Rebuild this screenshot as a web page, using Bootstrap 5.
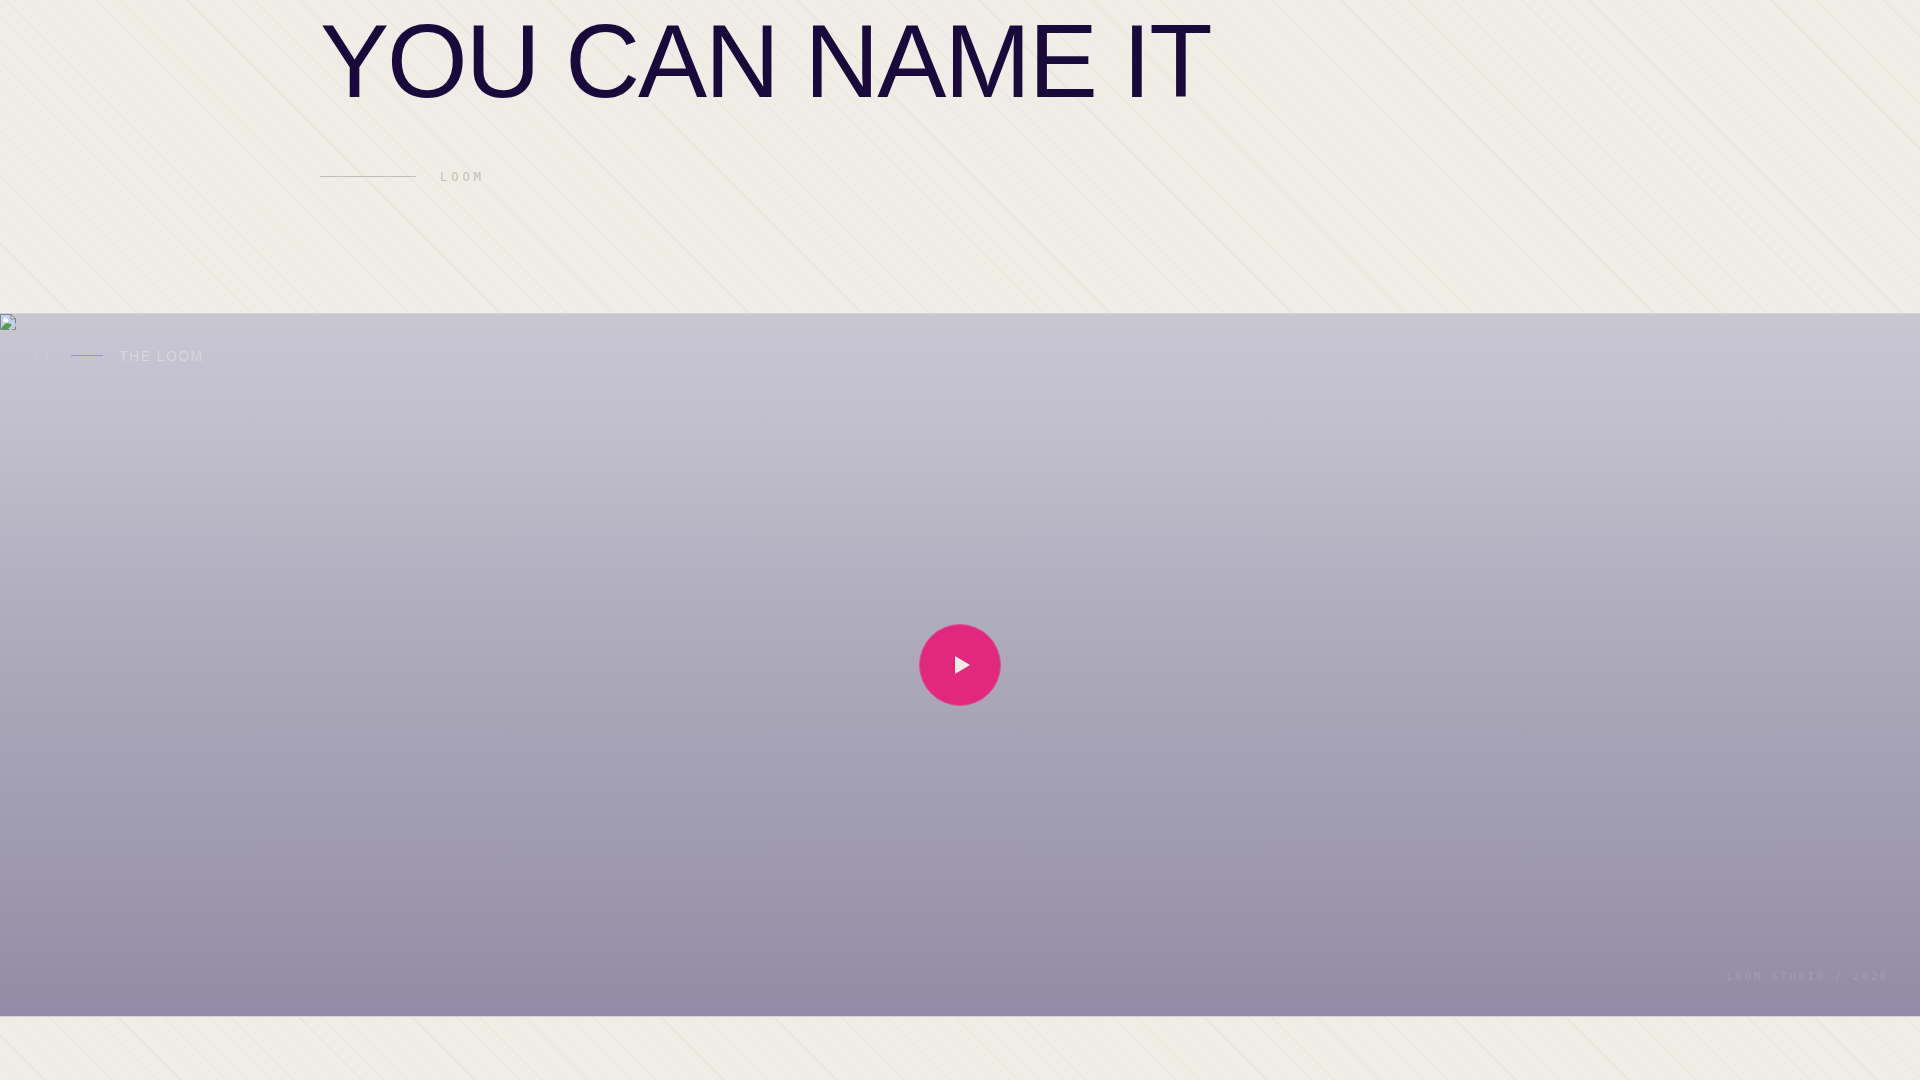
<!DOCTYPE html>
<html lang="en">
<head>
<meta charset="utf-8">
<meta name="viewport" content="width=device-width, initial-scale=1">
<title>Loom</title>
<link rel="stylesheet" href="https://cdn.jsdelivr.net/npm/bootstrap@5.3.0/dist/css/bootstrap.min.css">
<style>
  /* woven diagonal texture behind the content */
  body { background: #f0ede6 repeating-linear-gradient(45deg, transparent 0, transparent 15px, rgba(40,36,20,.06) 16px) fixed; color: #1a0a3c; font-family: "Liberation Sans", sans-serif; overflow-x: hidden; }
  .intro { padding: 1px 16.667vw 128px; }
  .intro-title { font-size: 5.4vw; line-height: 120px; letter-spacing: -.02em; font-weight: 400; }
  .mono { font-family: "DejaVu Sans Mono", monospace; }
  .intro-meta { padding-top: 48px; }
  .intro-rule { width: 96px; height: 1px; margin-bottom: 2px; background: #c0beba; }
  .intro-tag { font-size: 12px; line-height: 16px; letter-spacing: 4px; color: #c0beb9; }
  .film { box-sizing: content-box; height: 65vh; border-top: 1px solid #d5d3d8; border-bottom: 1px solid #d5d3d8;
    background: linear-gradient(#c8c6d1, #c2c0ce 14%, #b0adbe 42%, #9d98ad 80%, #938ba7); }
  .film-label { top: 30px; left: 32px; }
  .film-num { font-size: 11px; line-height: 22px; letter-spacing: 5px; color: #cdcbd6; }
  .film-rule { width: 32px; height: 1px; margin-bottom: 2px; background: #978fd6; }
  .film-name { font-size: 14px; line-height: 24px; letter-spacing: .1em; color: #d8d6de; }
  .film-credit { right: 31px; bottom: 32px; font-size: 10px; line-height: 14px; letter-spacing: 3px; color: #a49cb4; }
  .play, .play:hover { width: 82px; height: 82px; background: #e2287e; border: 1px solid #d05a98; }
  .outro { min-height: 63px; }
</style>
</head>
<body>
<main>
  <section class="intro">
    <h1 class="intro-title text-nowrap mb-0">YOU CAN NAME IT</h1>
    <div class="intro-meta d-flex align-items-center gap-4">
      <span class="intro-rule"></span><span class="intro-tag mono">LOOM</span>
    </div>
  </section>
  <section class="film position-relative d-flex align-items-center justify-content-center">
    <svg class="position-absolute top-0 start-0" width="16" height="16" viewBox="0 0 16 16" aria-hidden="true">
      <path d="M.5 .5H11L15.500 5V15.500H.5Z" fill="#c3d0ee" stroke="#80808c"/>
      <path d="M1 15C4 9 8 8 12 11L8 15Z" fill="#4da341"/><path d="M3 6a2 2 0 0 1 4-1 2 2 0 0 1 1 3H4Z" fill="#fff"/>
      <path d="M11 .5V5h4.500Z" fill="#eee" stroke="#80808c"/><path d="M9 16L16 9V12L12 16Z" fill="#c8c6d1"/>
    </svg>
    <div class="film-label position-absolute d-flex align-items-center gap-3">
      <span class="film-num mono">01</span><span class="film-rule"></span><span class="film-name">THE LOOM</span>
    </div>
    <button type="button" class="play btn rounded-circle p-0 d-flex align-items-center justify-content-center" aria-label="Play film">
      <svg class="ms-1" width="15" height="18" viewBox="0 0 15 18"><path d="M0 0L15 9L0 18Z" fill="#f0ede6"/></svg>
    </button>
    <div class="film-credit mono position-absolute">LOOM STUDIO / 2026</div>
  </section>
  <section class="outro"></section>
</main>
<script src="https://cdn.jsdelivr.net/npm/bootstrap@5.3.0/dist/js/bootstrap.bundle.min.js"></script>
</body>
</html>
